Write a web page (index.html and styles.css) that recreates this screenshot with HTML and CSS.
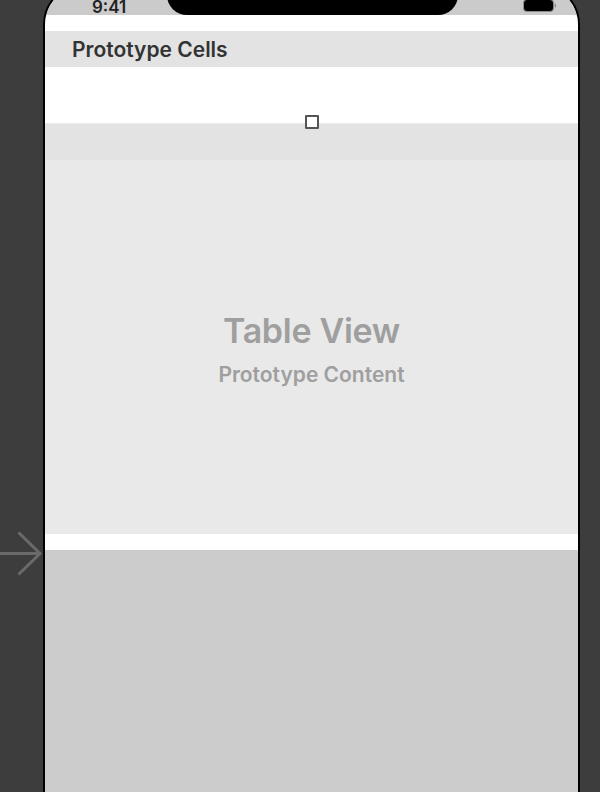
FILE: index.html
```html
<!DOCTYPE html>
<html lang="en">
<head>
    <meta charset="UTF-8">
    <meta name="viewport" content="width=device-width, initial-scale=1.0">
    <title>Storyboard - Table View Controller</title>
    <link rel="stylesheet" href="styles.css">
</head>
<body>
    <div class="canvas">
        <!-- storyboard entry point -->
        <svg class="entry-arrow" width="44" height="48" viewBox="0 0 44 48">
            <path d="M0 23.5 H40 M18.5 2.5 L40 23.5 L18.5 44.5" fill="none" stroke="#6a6a6a" stroke-width="3"/>
        </svg>

        <div class="phone">
            <div class="status-bar">
                <span class="time">9:41</span>
                <div class="notch"></div>
                <svg class="battery" width="34" height="14" viewBox="0 0 34 14">
                    <rect x="0.5" y="0.5" width="30" height="12" rx="3.5" fill="#000" stroke="#8c8c8c"/>
                    <rect x="31.5" y="4.5" width="1.5" height="4" rx="0.7" fill="#8c8c8c"/>
                </svg>
            </div>
            <div class="nav-space"></div>
            <div class="section-header">Prototype Cells</div>
            <div class="cell">
                <div class="cell-handle"></div>
            </div>
            <div class="section-footer"></div>
            <div class="table-view">
                <div class="table-title">Table View</div>
                <div class="table-subtitle">Prototype Content</div>
            </div>
            <div class="table-gap"></div>
            <div class="bottom-area"></div>
        </div>
    </div>
</body>
</html>
```

FILE: styles.css
```css
body {
    margin: 0;
    padding: 0;
    background-color: #3d3d3d;
    font-family: Inter, "Noto Sans", sans-serif;
    overflow: hidden;
}
.canvas {
    position: relative;
    width: 600px;
    height: 792px;
    overflow: hidden;
}
.entry-arrow {
    position: absolute;
    left: 0;
    top: 530px;
}
.phone {
    margin-left: 43px;
    margin-top: -17px;
    width: 533px;
    height: 900px;
    border: 2px solid #000;
    border-radius: 42px;
    overflow: hidden;
    background: #ccc;
    display: flex;
    flex-direction: column;
}
.status-bar {
    position: relative;
    height: 30px;
    flex-shrink: 0;
    background: #cbcbcb;
    display: flex;
    justify-content: space-between;
    align-items: flex-end;
    padding: 0 21px 0 47px;
}
.time {
    font-size: 17px;
    line-height: 17px;
    font-weight: 600;
    color: #222;
    margin-bottom: -1px;
}
.notch {
    position: absolute;
    left: 122px;
    top: 0;
    width: 291px;
    height: 30px;
    background: #000;
    border-radius: 0 0 20px 20px;
}
.battery {
    display: block;
    margin-bottom: 2px;
}
.nav-space {
    height: 16px;
    flex-shrink: 0;
    background: #fff;
}
.section-header {
    height: 36px;
    flex-shrink: 0;
    box-sizing: border-box;
    padding: 2px 0 0 27px;
    line-height: 34px;
    font-size: 21px;
    font-weight: 600;
    color: #333;
    background: #e3e3e3;
}
.cell {
    position: relative;
    height: 56px;
    flex-shrink: 0;
    background: #fff;
}
.cell-handle {
    position: absolute;
    left: 50%;
    top: 48px;
    width: 10px;
    height: 10px;
    margin-left: -7px;
    border: 2px solid #555;
    background: #fff;
    border-radius: 1px;
    z-index: 1;
}
.section-footer {
    height: 36px;
    flex-shrink: 0;
    background: #e3e3e3;
    border-top: 1px solid #ebebeb;
}
.table-view {
    height: 374px;
    flex-shrink: 0;
    box-sizing: border-box;
    padding-top: 151px;
    background: #e9e9e9;
    text-align: center;
    color: #9f9f9f;
}
.table-title {
    font-size: 34px;
    line-height: 40px;
    font-weight: 600;
    letter-spacing: -0.3px;
}
.table-subtitle {
    margin-top: 11px;
    font-size: 21px;
    line-height: 25px;
    font-weight: 600;
}
.table-gap {
    height: 16px;
    flex-shrink: 0;
    background: #fff;
}
.bottom-area {
    flex: 1;
    background: #ccc;
}
```
